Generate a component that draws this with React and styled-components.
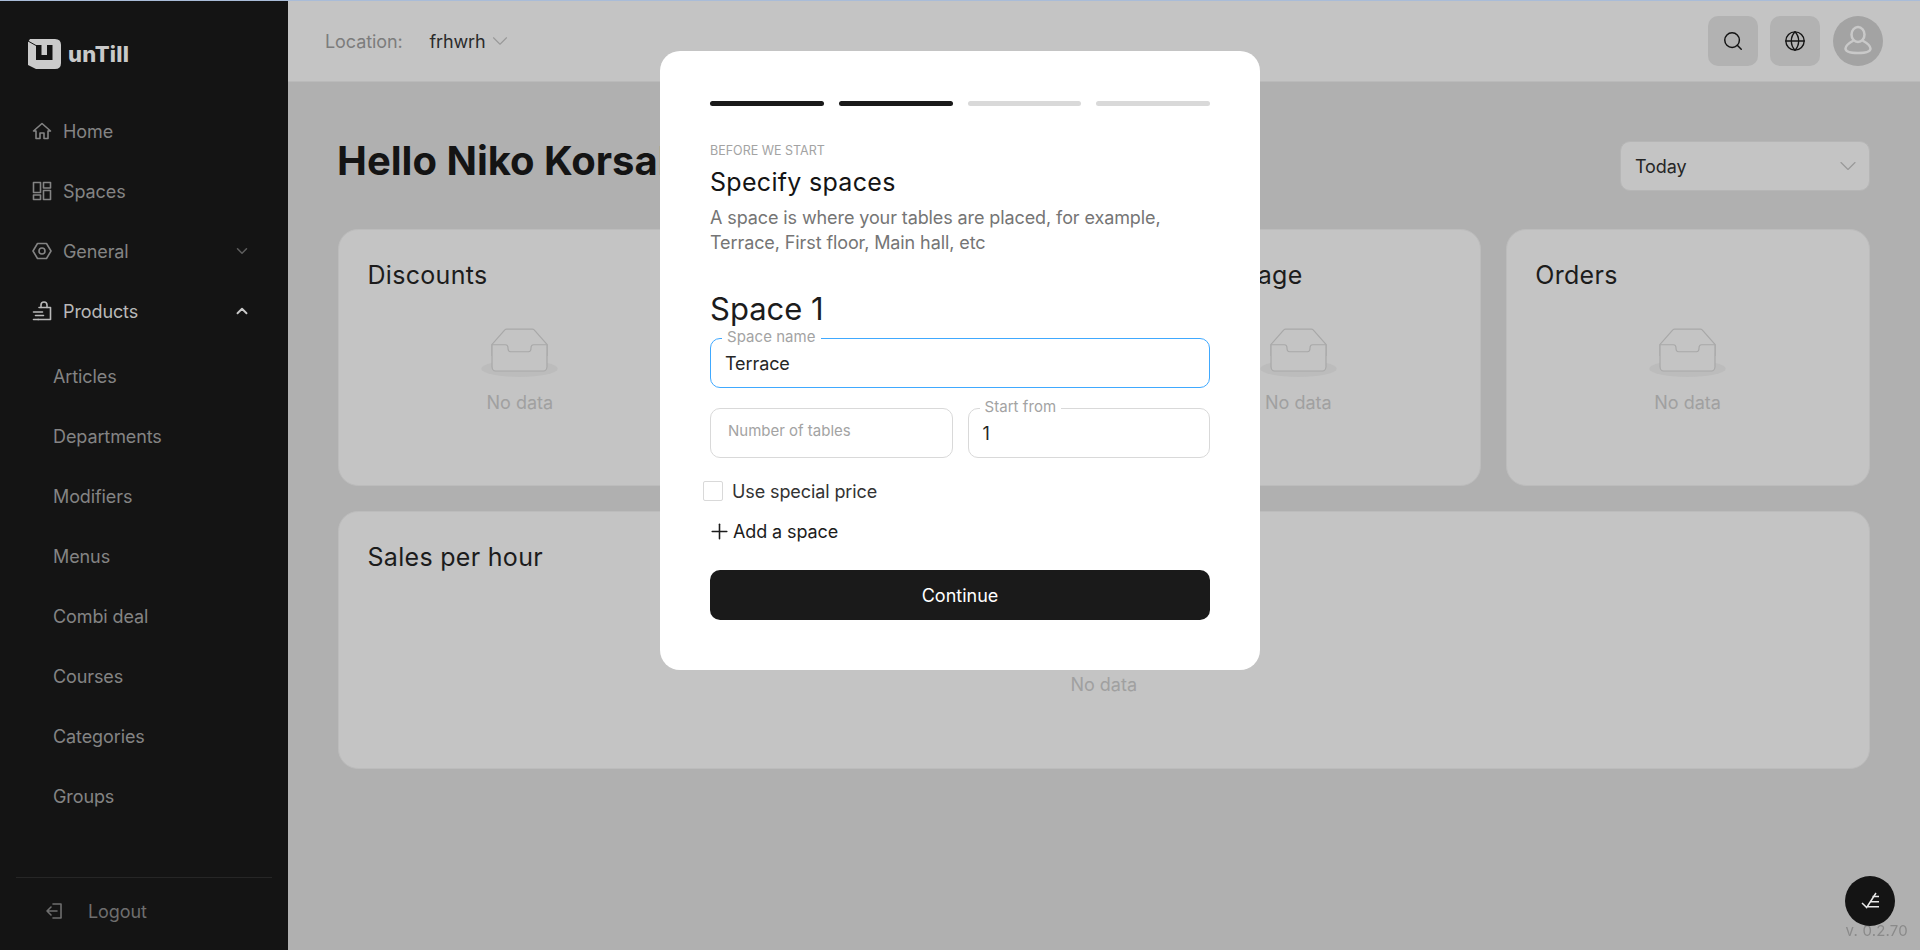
import React from "react";
import styled, { createGlobalStyle } from "styled-components";
import { ChevronDown, ChevronUp, Search, Globe, Plus } from "lucide-react";

const GlobalStyle = createGlobalStyle`
  html, body {
    margin: 0;
    padding: 0;
    height: 100%;
    overflow: hidden;
    background: #b0b0b0;
  }
  * {
    box-sizing: border-box;
  }
  body {
    font-family: "Inter", "Liberation Sans", sans-serif;
    color: #141414;
  }
`;

const Page = styled.div`
  height: 950px;
  display: flex;
  border-top: 1px solid #a9bcd8;
`;

const Sidebar = styled.aside`
  width: 288px;
  flex: none;
  background: #141414;
  display: flex;
  flex-direction: column;
`;

const LogoRow = styled.div`
  height: 100px;
  padding: 6px 0 0 28px;
  display: flex;
  align-items: center;
  gap: 7px;
`;

const LogoText = styled.span`
  font-size: 22px;
  font-weight: 800;
  letter-spacing: 0.2px;
  color: #c9c9c9;
`;

const Nav = styled.nav`
  flex: 1;
`;

const NavItem = styled.div`
  height: 60px;
  padding: 0 37px 0 32px;
  display: flex;
  align-items: center;
  gap: 11px;
  font-size: 18px;
  letter-spacing: -0.1px;
  color: ${(p) => (p.$open ? "#b9b9b9" : "#848484")};
  svg {
    flex: none;
  }
`;

const NavLabel = styled.span`
  flex: 1;
`;

const SubMenu = styled.div`
  padding-top: 5px;
`;

const SubItem = styled.div`
  height: 60px;
  padding-left: 53px;
  display: flex;
  align-items: center;
  font-size: 18px;
  letter-spacing: -0.1px;
  color: #848484;
`;

const Logout = styled.div`
  margin: 0 16px;
  height: 73px;
  border-top: 1px solid #262626;
  padding: 0 0 6px 29px;
  display: flex;
  align-items: center;
  gap: 25px;
  font-size: 18px;
  letter-spacing: -0.1px;
  color: #6e6e6e;
`;

const Main = styled.div`
  flex: 1;
  min-width: 0;
  display: flex;
  flex-direction: column;
`;

const Header = styled.header`
  height: 81px;
  flex: none;
  background: #c4c4c4;
  border-bottom: 1px solid #bababa;
  padding: 0 37px;
  display: flex;
  align-items: center;
  font-size: 18px;
`;

const LocationLabel = styled.span`
  color: #7c7c7c;
  margin-right: 27px;
  letter-spacing: -0.1px;
`;

const LocationValue = styled.span`
  color: #2b2b2b;
  margin-right: 2px;
  letter-spacing: -0.15px;
`;

const HeaderActions = styled.div`
  margin-left: auto;
  display: flex;
  align-items: center;
  gap: 12px;
`;

const IconButton = styled.div`
  width: 50px;
  height: 50px;
  border-radius: 10px;
  background: #b2b2b2;
  display: flex;
  align-items: center;
  justify-content: center;
  color: #141414;
`;

const Avatar = styled.div`
  width: 50px;
  height: 50px;
  margin-left: 1px;
  border-radius: 50%;
  background: #a3a3a3;
  padding-bottom: 2px;
  display: flex;
  align-items: center;
  justify-content: center;
`;

const Content = styled.main`
  flex: 1;
  padding: 59px 50px 0;
  display: flex;
  flex-direction: column;
`;

const TitleRow = styled.div`
  height: 50px;
  display: flex;
  align-items: center;
  justify-content: space-between;
  margin-bottom: 38px;
`;

const Title = styled.h1`
  margin: 0 0 12px -1px;
  font-size: 40px;
  font-weight: 700;
  color: #141414;
`;

const PeriodSelect = styled.div`
  width: 250px;
  height: 50px;
  border-radius: 10px;
  border: 1px solid #b6b6b6;
  background: #c4c4c4;
  padding: 0 7px 0 14px;
  display: flex;
  align-items: center;
  justify-content: space-between;
  font-size: 18px;
  letter-spacing: -0.1px;
  color: #262626;
`;

const CardGrid = styled.div`
  display: grid;
  grid-template-columns: repeat(4, 1fr);
  gap: 25px;
`;

const Card = styled.section`
  height: ${(p) => (p.$wide ? "258px" : "257px")};
  border-radius: 20px;
  background: #c4c4c4;
  border: 1px solid #bcbcbc;
  padding: 29px 29px 0 28.5px;
  grid-column: ${(p) => (p.$wide ? "1 / -1" : "auto")};
  display: flex;
  flex-direction: column;
`;

const CardTitle = styled.h2`
  margin: 0;
  font-size: 25px;
  line-height: 32px;
  font-weight: 400;
  letter-spacing: 0.3px;
  color: #1c1c1c;
`;

const Empty = styled.div`
  display: flex;
  flex-direction: column;
  align-items: center;
  margin-top: 37px;
  font-size: 18px;
  color: #a0a0a0;
  svg {
    display: block;
    margin-bottom: 15px;
  }
`;

const Modal = styled.div`
  position: fixed;
  left: 660px;
  top: 51px;
  width: 600px;
  height: 619px;
  background: #fff;
  border-radius: 20px;
  padding: 50px;
`;

const Steps = styled.div`
  display: grid;
  grid-template-columns: repeat(4, 1fr);
  gap: 15px;
  margin-bottom: 37px;
`;

const Step = styled.div`
  height: 5px;
  border-radius: 3px;
  background: ${(p) => (p.$done ? "#1a1a1a" : "#d9d9d9")};
`;

const Eyebrow = styled.div`
  font-size: 12.5px;
  line-height: 16px;
  color: #a3a3a3;
  text-transform: uppercase;
  margin-bottom: 7px;
`;

const ModalTitle = styled.h2`
  margin: 0 0 7px;
  font-size: 25px;
  line-height: 32px;
  font-weight: 400;
  letter-spacing: 0.3px;
  color: #141414;
`;

const Lead = styled.p`
  margin: 0 0 34px;
  font-size: 18px;
  line-height: 25px;
  letter-spacing: -0.1px;
  color: #757575;
`;

const SpaceTitle = styled.h3`
  margin: 0 0 9px;
  font-size: 31px;
  line-height: 40px;
  font-weight: 400;
  color: #1c1c1c;
`;

const Field = styled.div`
  position: relative;
  height: 50px;
  border-radius: 10px;
  border: 1px solid ${(p) => (p.$focused ? "#40a9ff" : "#d9d9d9")};
  padding: 0 14px;
  display: flex;
  align-items: center;
  font-size: 18px;
  letter-spacing: -0.1px;
  color: #262626;
`;

const FieldLabel = styled.label`
  position: absolute;
  left: 11px;
  top: -10px;
  padding: 0 5px;
  background: #fff;
  font-size: 15px;
  line-height: 16px;
  letter-spacing: 0.05px;
  color: #a3a3a3;
`;

const Placeholder = styled.span`
  font-size: 15px;
  letter-spacing: 0;
  color: #a3a3a3;
  margin: -5px 0 0 3px;
`;

const FieldRow = styled.div`
  display: grid;
  grid-template-columns: 1fr 1fr;
  gap: 15px;
  margin-top: 20px;
`;

const CheckRow = styled.div`
  display: flex;
  align-items: center;
  gap: 9px;
  margin: 23px 0 0 -7px;
  height: 20px;
  font-size: 18px;
  letter-spacing: -0.1px;
  color: #333;
`;

const CheckBox = styled.span`
  width: 20px;
  height: 20px;
  border-radius: 2px;
  border: 1px solid #d9d9d9;
`;

const AddRow = styled.div`
  display: flex;
  align-items: center;
  gap: 1px;
  margin: 20px 0 0 -3px;
  height: 20px;
  font-size: 18px;
  letter-spacing: -0.1px;
  color: #1c1c1c;
`;

const ContinueButton = styled.button`
  display: block;
  width: 100%;
  height: 50px;
  margin-top: 29px;
  border: 0;
  border-radius: 10px;
  background: #1a1a1a;
  color: #fff;
  font: inherit;
  font-size: 18px;
  font-weight: 400;
`;

const Fab = styled.div`
  position: fixed;
  right: 25px;
  bottom: 24px;
  width: 50px;
  height: 50px;
  border-radius: 50%;
  background: #141414;
  display: flex;
  align-items: center;
  justify-content: center;
  z-index: 2;
`;

const Version = styled.div`
  position: fixed;
  right: 12px;
  bottom: 10px;
  font-size: 15px;
  color: #8a8a8a;
  letter-spacing: 0.2px;
`;

function LogoMark() {
  return (
    <svg width="33" height="31" viewBox="0 0 33 31">
      <path fill="#cbcbcb" d="M2 0H27Q33 0 33 6V24Q33 30 27 30H8L0 26V3Z" />
      <path fill="#141414" d="M8 6H13.500V16H19V6H24.500V21H8Z" />
      <path stroke="#141414" strokeWidth="1" fill="none" d="M0 2 8 6.500" />
    </svg>
  );
}

const navStroke = {
  fill: "none",
  stroke: "currentColor",
  strokeWidth: 1.6,
  strokeLinejoin: "round",
  strokeLinecap: "round",
};

function HomeIcon() {
  return (
    <svg width="20" height="20" viewBox="0 0 20 20" {...navStroke}>
      <path d="M1.500 10 10 2.500 18.500 10H16v7.500h-4V12H8v5.500H4V10Z" />
    </svg>
  );
}

function SpacesIcon() {
  return (
    <svg width="20" height="20" viewBox="0 0 20 20" {...navStroke}>
      <rect x="1.500" y="1.500" width="7" height="10" />
      <rect x="11.500" y="1.500" width="7" height="5.500" />
      <rect x="1.500" y="14" width="7" height="4.500" />
      <rect x="11.500" y="9.500" width="7" height="9" />
    </svg>
  );
}

function GeneralIcon() {
  return (
    <svg width="20" height="20" viewBox="0 0 20 20" {...navStroke}>
      <path d="M5.500 2.500h9L19 10l-4.500 7.500h-9L1 10Z" />
      <circle cx="10" cy="10" r="3" />
    </svg>
  );
}

function ProductsIcon() {
  return (
    <svg width="20" height="20" viewBox="0 0 20 20" {...navStroke}>
      <path d="M7 6.500H18.500V18.500H6" />
      <path d="M9 6.500V4a3 3 0 0 1 6 0v2.500" />
      <path d="M1.500 11h9M3.500 14.500h8M1.500 18.500h5" />
    </svg>
  );
}

function LogoutIcon() {
  return (
    <svg width="18" height="18" viewBox="0 0 18 18" {...navStroke}>
      <path d="M8 2h8v14H8" />
      <path d="M12 9H2M6 5 2 9l4 4" />
    </svg>
  );
}

function UserIcon() {
  return (
    <svg width="30" height="30" viewBox="0 0 30 30" fill="none" stroke="#c9c9c9" strokeWidth="2.500">
      <ellipse cx="15" cy="9.500" rx="6.500" ry="7.500" />
      <path d="M10.500 15.500C6 18 2.500 20.500 2.500 23.500C2.500 26.500 7 28 15 28C23 28 27.500 26.500 27.500 23.500C27.500 20.500 24 18 19.500 15.500" />
    </svg>
  );
}

function TasksIcon() {
  return (
    <svg width="20" height="20" viewBox="0 0 20 20" fill="none" stroke="#e8e8e8" strokeWidth="1.500">
      <path d="M2 12l4.700 4.500L16 2" />
      <path d="M12.500 5.500H19M10.500 10.700H19M8 15.700H19" />
    </svg>
  );
}

function EmptyIcon() {
  return (
    <svg width="77" height="49" viewBox="0 0 64 41">
      <g transform="translate(0 1)" fill="none" fillRule="evenodd">
        <ellipse fill="#bcbcbc" cx="32" cy="33" rx="32" ry="7" />
        <g fillRule="nonzero" stroke="#a8a8a8">
          <path d="M55 12.760L44.854 1.258C44.367.474 43.656 0 42.907 0H21.093c-.749 0-1.460.474-1.947 1.257L9 12.761V22h46v-9.240z" />
          <path
            d="M41.613 15.931c0-1.605.994-2.930 2.227-2.931H55v18.137C55 33.260 53.680 35 52.050 35h-40.100C10.320 35 9 33.259 9 31.137V13h11.160c1.233 0 2.227 1.323 2.227 2.928v.022c0 1.605 1.005 2.901 2.237 2.901h14.752c1.232 0 2.237-1.308 2.237-2.913v-.007z"
            fill="#c4c4c4"
          />
        </g>
      </g>
    </svg>
  );
}

function NoData() {
  return (
    <Empty>
      <EmptyIcon />
      No data
    </Empty>
  );
}

const subItems = ["Articles", "Departments", "Modifiers", "Menus", "Combi deal", "Courses", "Categories", "Groups"];
const cards = ["Discounts", "Average bill", "Sale average", "Orders"];

export default function App() {
  return (
    <>
      <GlobalStyle />
      <Page>
        <Sidebar>
          <LogoRow>
            <LogoMark />
            <LogoText>unTill</LogoText>
          </LogoRow>
          <Nav>
            <NavItem>
              <HomeIcon />
              <NavLabel>Home</NavLabel>
            </NavItem>
            <NavItem>
              <SpacesIcon />
              <NavLabel>Spaces</NavLabel>
            </NavItem>
            <NavItem>
              <GeneralIcon />
              <NavLabel>General</NavLabel>
              <ChevronDown size={18} strokeWidth={2} color="#5e5e5e" />
            </NavItem>
            <NavItem $open>
              <ProductsIcon />
              <NavLabel>Products</NavLabel>
              <ChevronUp size={18} strokeWidth={2.5} color="#c9c9c9" />
            </NavItem>
            <SubMenu>
              {subItems.map((item) => (
                <SubItem key={item}>{item}</SubItem>
              ))}
            </SubMenu>
          </Nav>
          <Logout>
            <LogoutIcon />
            Logout
          </Logout>
        </Sidebar>
        <Main>
          <Header>
            <LocationLabel>Location:</LocationLabel>
            <LocationValue>frhwrh</LocationValue>
            <ChevronDown size={26} strokeWidth={1} color="#999" />
            <HeaderActions>
              <IconButton>
                <Search size={22} strokeWidth={1.6} />
              </IconButton>
              <IconButton>
                <Globe size={22} strokeWidth={1.5} />
              </IconButton>
              <Avatar>
                <UserIcon />
              </Avatar>
            </HeaderActions>
          </Header>
          <Content>
            <TitleRow>
              <Title>Hello Niko Korsakov</Title>
              <PeriodSelect>
                Today
                <ChevronDown size={28} strokeWidth={1} color="#999" />
              </PeriodSelect>
            </TitleRow>
            <CardGrid>
              {cards.map((title) => (
                <Card key={title}>
                  <CardTitle>{title}</CardTitle>
                  <NoData />
                </Card>
              ))}
              <Card $wide>
                <CardTitle>Sales per hour</CardTitle>
                <NoData />
              </Card>
            </CardGrid>
          </Content>
        </Main>
      </Page>

      <Modal>
        <Steps>
          <Step $done />
          <Step $done />
          <Step />
          <Step />
        </Steps>
        <Eyebrow>Before we start</Eyebrow>
        <ModalTitle>Specify spaces</ModalTitle>
        <Lead>
          A space is where your tables are placed, for example,
          <br />
          Terrace, First floor, Main hall, etc
        </Lead>
        <SpaceTitle>Space 1</SpaceTitle>
        <Field $focused>
          <FieldLabel>Space name</FieldLabel>
          Terrace
        </Field>
        <FieldRow>
          <Field>
            <Placeholder>Number of tables</Placeholder>
          </Field>
          <Field>
            <FieldLabel>Start from</FieldLabel>1
          </Field>
        </FieldRow>
        <CheckRow>
          <CheckBox />
          Use special price
        </CheckRow>
        <AddRow>
          <Plus size={25} strokeWidth={1.5} />
          Add a space
        </AddRow>
        <ContinueButton>Continue</ContinueButton>
      </Modal>

      <Fab>
        <TasksIcon />
      </Fab>
      <Version>v. 0.2.70</Version>
    </>
  );
}
